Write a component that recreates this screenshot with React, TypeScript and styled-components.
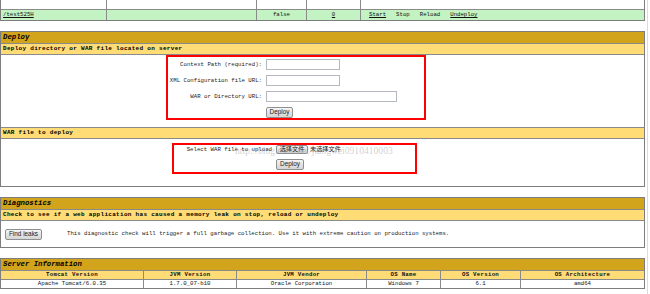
import React from 'react'
import styled, { createGlobalStyle } from 'styled-components'

const GlobalStyle = createGlobalStyle`
  html, body {
    margin: 0;
    padding: 0;
    background: #fff;
  }
  * {
    box-sizing: border-box;
  }
`

const MONO = '"Liberation Mono", "DejaVu Sans Mono", monospace'

const Page = styled.div`
  width: 648px;
  min-height: 294px;
  padding-right: 2px;
  border-right: 1px solid #dcdcdc;
  font-family: ${MONO};
  color: #111;
`

const Main = styled.div`
  width: 645px;
`

const Panel = styled.div<{ $top?: number; $open?: boolean }>`
  border: 1px solid #7d7d7d;
  border-top-width: ${p => (p.$open ? 0 : 1)}px;
  margin-top: ${p => p.$top ?? 0}px;
`

const TitleBar = styled.div`
  height: 12px;
  padding-left: 2px;
  background: #d2a41c;
  border-bottom: 1px solid #8a8a8a;
  font: italic bold 7.3px/11px ${MONO};
  color: #000;
`

const SubHeader = styled.div`
  height: 11px;
  padding-left: 2px;
  background: #ffdc75;
  border-bottom: 1px solid #8a8a8a;
  font: bold 6px/10px ${MONO};
  letter-spacing: 0.3px;
  color: #000;
  white-space: nowrap;
`

const Row = styled.div<{ $cols: string; $h: number; $bg?: string; $last?: boolean }>`
  display: grid;
  grid-template-columns: ${p => p.$cols};
  height: ${p => p.$h + (p.$last ? 0 : 1)}px;
  background: ${p => p.$bg ?? '#fff'};
  border-bottom: ${p => (p.$last ? 'none' : '1px solid #8a8a8a')};
`

const Cell = styled.div<{ $align?: 'left' | 'center'; $bold?: boolean; $h: number }>`
  display: flex;
  align-items: center;
  justify-content: ${p => (p.$align === 'left' ? 'flex-start' : 'center')};
  padding-left: ${p => (p.$align === 'left' ? 2 : 0)}px;
  border-left: 1px solid #8a8a8a;
  font: ${p => (p.$bold ? 'bold' : 'normal')} 5.7px/${p => p.$h}px ${MONO};
  letter-spacing: ${p => (p.$bold ? 0.3 : 0)}px;
  color: #111;
  white-space: nowrap;
  overflow: hidden;

  &:first-child {
    border-left: none;
  }
`

const Link = styled.a`
  color: #111;
  text-decoration: underline;
`

const Actions = styled.span`
  display: inline-flex;
  gap: 10px;
  padding-left: 6px;
`

const Body = styled.div<{ $h: number; $last?: boolean }>`
  height: ${p => p.$h + (p.$last ? 0 : 1)}px;
  border-bottom: ${p => (p.$last ? 'none' : '1px solid #8a8a8a')};
`

const Marked = styled.div<{ $left: number; $top: number; $w: number; $label: number; $rows: string; $gap: number; $pt: number; $pb: number }>`
  position: relative;
  width: ${p => p.$w}px;
  margin: ${p => p.$top}px 0 0 ${p => p.$left}px;
  padding: ${p => p.$pt}px 0 ${p => p.$pb}px;
  border: 2px solid #ff0000;
  display: grid;
  grid-template-columns: ${p => p.$label}px auto;
  grid-auto-rows: ${p => p.$rows};
  column-gap: 4px;
  row-gap: ${p => p.$gap}px;
  align-items: center;
`

const Label = styled.span`
  justify-self: end;
  font: 5.7px/8px ${MONO};
  color: #222;
  white-space: nowrap;
`

const Field = styled.div`
  display: flex;
  align-items: center;
  gap: 2px;
`

const TextInput = styled.input<{ $w: number }>`
  width: ${p => p.$w}px;
  height: 11px;
  padding: 0;
  border: 1px solid #b5b8bf;
  background: #fff;
`

const Button = styled.button<{ $w: number; $h: number }>`
  width: ${p => p.$w}px;
  height: ${p => p.$h}px;
  padding: 0;
  border: 1px solid #8e8f8f;
  border-radius: 2px;
  background: linear-gradient(#f6f6f6, #e2e2e2 50%, #d6d6d6);
  font: 6.4px/1 "Liberation Sans", Arial, sans-serif;
  color: #222;
`

const CjkButton = styled(Button)`
  font: 6.2px/1 "Noto Sans CJK SC", sans-serif;
`

const CjkText = styled.span`
  font: 6.2px/1 "Noto Sans CJK SC", sans-serif;
  color: #222;
`

const Watermark = styled.span`
  position: absolute;
  left: 61px;
  top: 1px;
  font: 9.6px/10px "Liberation Serif", serif;
  color: rgba(150, 150, 150, 0.45);
  white-space: nowrap;
  pointer-events: none;
`

const DiagRow = styled.div`
  display: flex;
  align-items: center;
  gap: 25px;
  height: 26px;
  padding-left: 4px;
`

const Note = styled.span`
  font: 5.7px/8px ${MONO};
  color: #222;
  white-space: nowrap;
`

const APP_COLS = '105px 150px 50px 54px 284px'
const INFO_COLS = '142px 93px 130px 74px 80px 124px'

const infoHeads = ['Tomcat Version', 'JVM Version', 'JVM Vendor', 'OS Name', 'OS Version', 'OS Architecture']
const infoValues = ['Apache Tomcat/6.0.35', '1.7.0_07-b10', 'Oracle Corporation', 'Windows 7', '6.1', 'amd64']

export default function App() {
  return (
    <Page>
      <GlobalStyle />
      <Main>
        <Panel $open>
          <Row $cols={APP_COLS} $h={9}>
            <Cell $h={9} />
            <Cell $h={9} />
            <Cell $h={9} />
            <Cell $h={9} />
            <Cell $h={9} />
          </Row>
          <Row $cols={APP_COLS} $h={10} $bg="#c3f3c3" $last>
            <Cell $h={10} $align="left"><Link href="#">/test525H</Link></Cell>
            <Cell $h={10} />
            <Cell $h={10}>false</Cell>
            <Cell $h={10}><Link href="#">0</Link></Cell>
            <Cell $h={10} $align="left">
              <Actions>
                <Link href="#">Start</Link>
                <span>Stop</span>
                <span>Reload</span>
                <Link href="#">Undeploy</Link>
              </Actions>
            </Cell>
          </Row>
        </Panel>

        <Panel $top={10}>
          <TitleBar>Deploy</TitleBar>
          <SubHeader>Deploy directory or WAR file located on server</SubHeader>
          <Body $h={72}>
            <Marked $left={165} $top={0} $w={260} $label={94} $rows="11px" $gap={5} $pt={2} $pb={0}>
              <Label>Context Path (required):</Label>
              <Field><TextInput $w={74} /></Field>
              <Label>XML Configuration file URL:</Label>
              <Field><TextInput $w={74} /></Field>
              <Label>WAR or Directory URL:</Label>
              <Field><TextInput $w={131} /></Field>
              <span />
              <Field><Button $w={27} $h={11}>Deploy</Button></Field>
            </Marked>
          </Body>
          <SubHeader>WAR file to deploy</SubHeader>
          <Body $h={43} $last>
            <Marked $left={171} $top={4} $w={245} $label={98} $rows="9px" $gap={6} $pt={0} $pb={3}>
              <Label>Select WAR file to upload</Label>
              <Field>
                <CjkButton $w={32} $h={9}>选择文件</CjkButton>
                <CjkText>未选择文件</CjkText>
              </Field>
              <span />
              <Field><Button $w={28} $h={11}>Deploy</Button></Field>
              <Watermark>http://blog.csdn.net/jiangwei0910410003</Watermark>
            </Marked>
          </Body>
        </Panel>

        <Panel $top={10}>
          <TitleBar>Diagnostics</TitleBar>
          <SubHeader>Check to see if a web application has caused a memory leak on stop, reload or undeploy</SubHeader>
          <DiagRow>
            <Button $w={37} $h={11}>Find leaks</Button>
            <Note>This diagnostic check will trigger a full garbage collection. Use it with extreme caution on production systems.</Note>
          </DiagRow>
        </Panel>

        <Panel $top={10}>
          <TitleBar>Server Information</TitleBar>
          <Row $cols={INFO_COLS} $h={8} $bg="#ffdc75">
            {infoHeads.map(h => (
              <Cell key={h} $h={8} $bold>{h}</Cell>
            ))}
          </Row>
          <Row $cols={INFO_COLS} $h={8} $last>
            {infoValues.map(v => (
              <Cell key={v} $h={8}>{v}</Cell>
            ))}
          </Row>
        </Panel>
      </Main>
    </Page>
  )
}
